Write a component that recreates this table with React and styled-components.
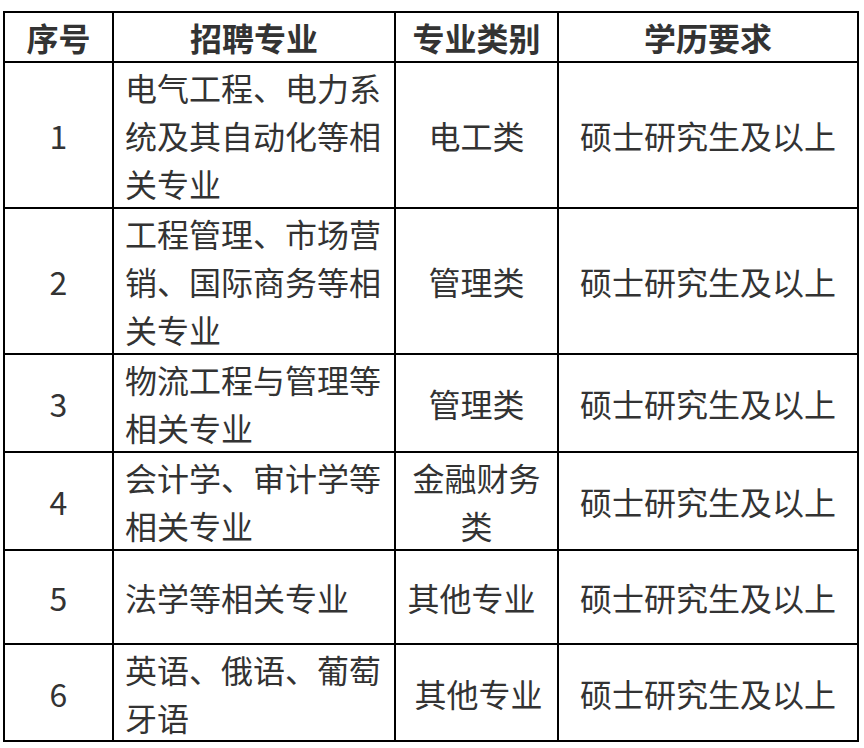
import React from 'react'
import styled, { createGlobalStyle } from 'styled-components'

const GlobalStyle = createGlobalStyle`
body {
    margin: 0;
    background: #ffffff;
    font-family: "Microsoft YaHei", "Noto Sans CJK SC", "Noto Sans", sans-serif;
}
`

const rows = [
    { no: '1', major: '电气工程、电力系统及其自动化等相关专业', type: '电工类', height: 144 },
    { no: '2', major: '工程管理、市场营销、国际商务等相关专业', type: '管理类', height: 144 },
    { no: '3', major: '物流工程与管理等相关专业', type: '管理类', height: 96 },
    { no: '4', major: '会计学、审计学等相关专业', type: '金融财务类', height: 96 },
    { no: '5', major: '法学等相关专业', type: '其他专业', height: 92, shift: -5 },
    { no: '6', major: '英语、俄语、葡萄牙语', type: '其他专业', height: 95, shift: 2 },
]

function App() {
    return (
        <Page>
            <GlobalStyle />
            <Grid>
                <Head>序号</Head>
                <Head>招聘专业</Head>
                <Head>专业类别</Head>
                <Head>学历要求</Head>
                {rows.map(row => (
                    <React.Fragment key={row.no}>
                        <Cell h={row.height}>{row.no}</Cell>
                        <Cell h={row.height} left>{row.major}</Cell>
                        <Cell h={row.height} shift={row.shift}>{row.type}</Cell>
                        <Cell h={row.height}>硕士研究生及以上</Cell>
                    </React.Fragment>
                ))}
            </Grid>
        </Page>
    )
}

export default App

const Page = styled.div`
padding: 11px 3px;
`

const Grid = styled.div`
display: grid;
grid-template-columns: 107px 280px 161px 298px;
gap: 2px;
padding: 2px;
width: max-content;
background-color: #000000;
`

const Head = styled.div`
background-color: #ffffff;
height: 48px;
display: flex;
align-items: center;
justify-content: center;
font-size: 32px;
line-height: 48px;
font-weight: 700;
color: #333333;
`

const Cell = styled.div`
background-color: #ffffff;
height: ${p => p.h}px;
display: flex;
align-items: center;
justify-content: ${p => p.left ? 'flex-start' : 'center'};
text-align: ${p => p.left ? 'left' : 'center'};
padding: ${p => p.left ? '0 10px 0 11px' : `0 ${10 - (p.shift || 0)}px 0 ${10 + (p.shift || 0)}px`};
box-sizing: border-box;
font-size: 32px;
line-height: 48px;
color: #333333;
`
